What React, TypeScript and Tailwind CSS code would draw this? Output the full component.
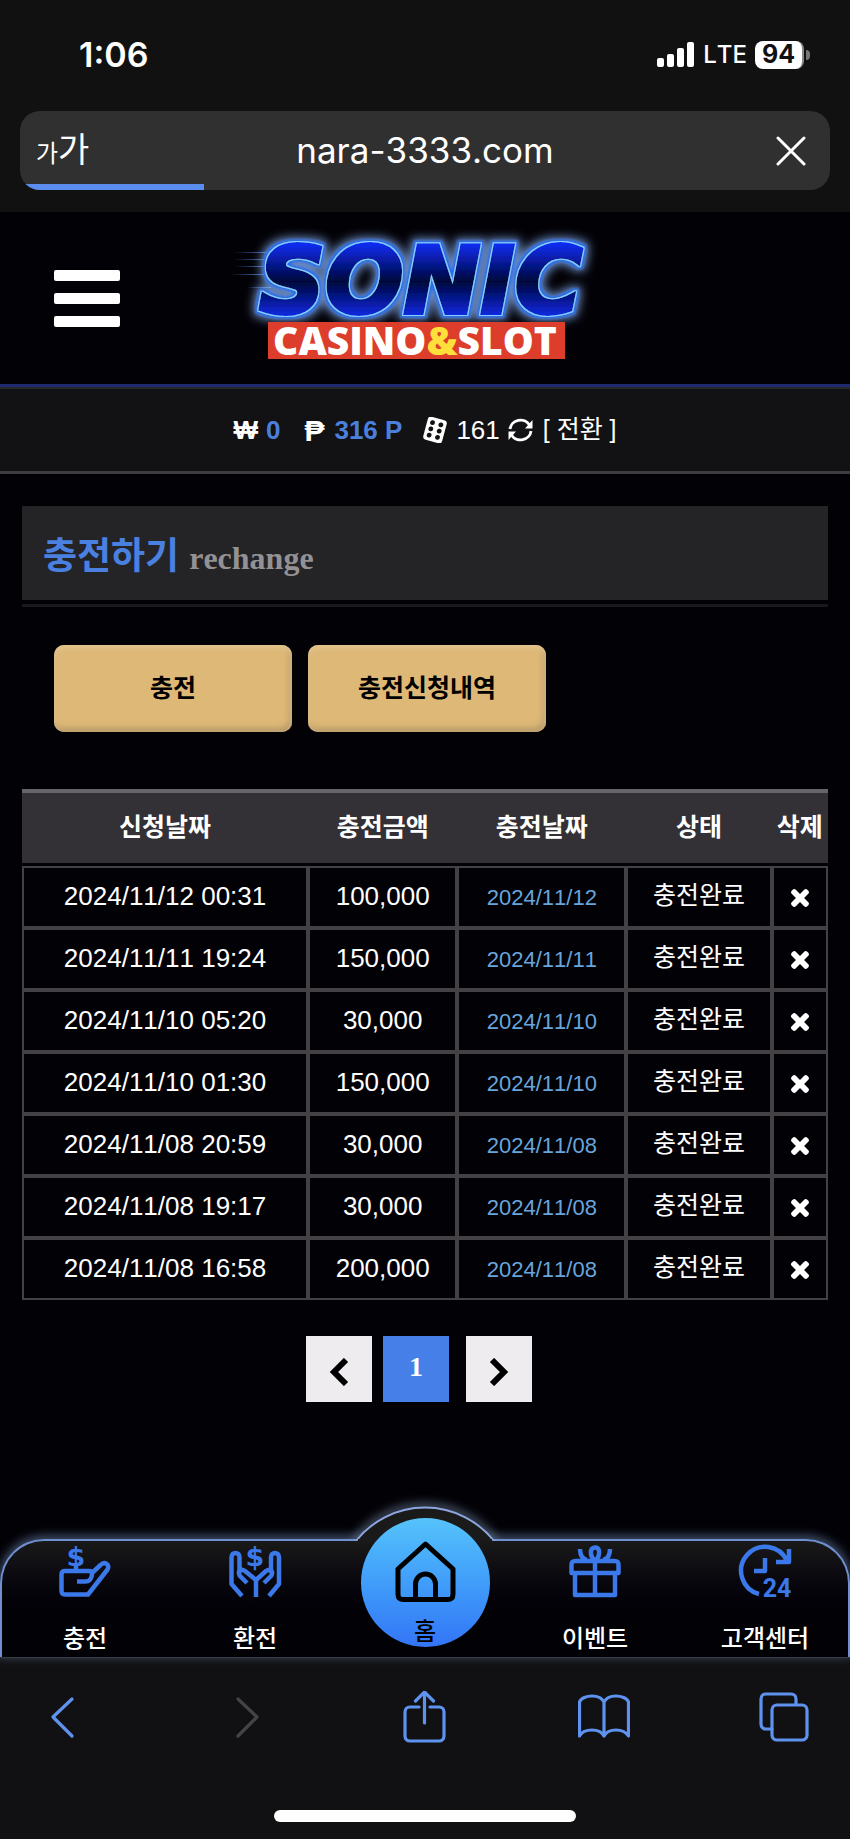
import { FaTimes } from "react-icons/fa";
import type { ReactNode } from "react";

const kr = "font-['Liberation_Sans','Noto_Sans_CJK_KR',sans-serif]";

const columns = ["신청날짜", "충전금액", "충전날짜", "상태", "삭제"];

const rows = [
  { requested: "2024/11/12 00:31", amount: "100,000", date: "2024/11/12" },
  { requested: "2024/11/11 19:24", amount: "150,000", date: "2024/11/11" },
  { requested: "2024/11/10 05:20", amount: "30,000", date: "2024/11/10" },
  { requested: "2024/11/10 01:30", amount: "150,000", date: "2024/11/10" },
  { requested: "2024/11/08 20:59", amount: "30,000", date: "2024/11/08" },
  { requested: "2024/11/08 19:17", amount: "30,000", date: "2024/11/08" },
  { requested: "2024/11/08 16:58", amount: "200,000", date: "2024/11/08" },
];

function StatusBar() {
  return (
    <div className="flex h-[109px] items-center justify-between pr-10 pl-[79px] font-['Inter',sans-serif] text-white">
      <span className="text-[34px] font-semibold">1:06</span>
      <div className="flex items-center gap-2">
        <svg width="38" height="26" viewBox="0 0 38 26" fill="currentColor">
          <rect x="0" y="16" width="7" height="9" rx="2" />
          <rect x="10" y="12" width="7" height="13" rx="2" />
          <rect x="20" y="6" width="7" height="19" rx="2" />
          <rect x="30" y="0" width="7" height="25" rx="2" />
        </svg>
        <span className="text-[24px] font-medium">LTE</span>
        <div className="flex items-center gap-0.5">
          <span className="flex h-7 w-[49px] items-center justify-center rounded-lg border-r-2 border-[#8a8a8a] bg-white text-[25px] font-bold text-[#111]">
            94
          </span>
          <span className="h-2.5 w-1 rounded-r-full bg-[#777]" />
        </div>
      </div>
    </div>
  );
}

function AddressBar() {
  return (
    <div className="mx-5 mt-0.5 mb-[22px] grid h-[79px] grid-cols-[1fr_auto_1fr] grid-rows-[1fr_6px] items-center overflow-hidden rounded-[20px] bg-[#303030] text-white">
      <button
        type="button"
        className="flex items-baseline justify-self-start pl-4 font-['Noto_Sans_CJK_KR',sans-serif] leading-none"
      >
        <span className="text-[24px]">가</span>
        <span className="text-[34px]">가</span>
      </button>
      <span className="pt-1.5 font-['Inter',sans-serif] text-[35px] leading-none">
        nara-3333.com
      </span>
      <button type="button" aria-label="Stop" className="justify-self-end pt-1.5 pr-6">
        <svg width="30" height="30" viewBox="0 0 30 30" fill="none" stroke="currentColor" strokeWidth="3" strokeLinecap="round">
          <path d="M2 2l26 26M28 2L2 28" />
        </svg>
      </button>
      <div className="col-span-3 h-full">
        <div className="h-full w-[184px] bg-[#5b8def]" />
      </div>
    </div>
  );
}

function Logo() {
  return (
    <svg width="400" height="145" viewBox="0 0 400 145" role="img" aria-label="SONIC CASINO&SLOT">
      <defs>
        <linearGradient id="sonicFill" x1="0" y1="0" x2="0" y2="1">
          <stop offset="0.15" stopColor="#0a2cf0" />
          <stop offset="0.5" stopColor="#03063c" />
          <stop offset="0.85" stopColor="#0a2cf0" />
        </linearGradient>
        <linearGradient id="speed" x1="0" y1="0" x2="1" y2="0">
          <stop offset="0" stopColor="#5b8def" stopOpacity="0" />
          <stop offset="1" stopColor="#5b8def" />
        </linearGradient>
        {/* thin light rim, blue band round it, then the outer haze */}
        <filter id="neon" x="-10%" y="-40%" width="120%" height="180%">
          <feMorphology in="SourceAlpha" operator="dilate" radius="1" result="rimShape" />
          <feFlood floodColor="#86d0ff" />
          <feComposite in2="rimShape" operator="in" result="rim" />
          <feMorphology in="SourceAlpha" operator="dilate" radius="3" result="bandShape" />
          <feGaussianBlur in="bandShape" stdDeviation="1" result="bandSoft" />
          <feFlood floodColor="#2a6fe6" />
          <feComposite in2="bandSoft" operator="in" result="band" />
          <feMorphology in="SourceAlpha" operator="dilate" radius="5" result="hazeShape" />
          <feGaussianBlur in="hazeShape" stdDeviation="5" result="hazeSoft" />
          <feFlood floodColor="#7fa8e8" floodOpacity="0.8" />
          <feComposite in2="hazeSoft" operator="in" result="haze" />
          <feMerge>
            <feMergeNode in="haze" />
            <feMergeNode in="band" />
            <feMergeNode in="rim" />
            <feMergeNode in="SourceGraphic" />
          </feMerge>
        </filter>
      </defs>
      <g fill="url(#speed)">
        <rect x="8" y="26" width="44" height="1" />
        <rect x="8" y="33" width="42" height="1" />
        <rect x="10" y="40" width="38" height="1" />
        <rect x="5" y="48" width="42" height="1" />
        <rect x="22" y="61" width="24" height="1" />
        <rect x="28" y="76" width="12" height="1" />
      </g>
      <text
        x="34"
        y="87"
        fontFamily="'DejaVu Sans', sans-serif"
        fontWeight="700"
        fontStyle="italic"
        fontSize="92"
        fill="url(#sonicFill)"
        stroke="url(#sonicFill)"
        strokeWidth="4"
        filter="url(#neon)"
      >
        SONIC
      </text>
      <rect x="43" y="96" width="297" height="37" fill="#dd3d2b" />
      <text x="190" y="129" textAnchor="middle" fontFamily="'Open Sans', sans-serif" fontWeight="800" fontSize="39" fill="#fff">
        CASINO<tspan fill="#ffe03a">&amp;</tspan>SLOT
      </text>
    </svg>
  );
}

function Balance() {
  return (
    <div className="flex h-[87px] items-center justify-center border-t-2 border-b-3 border-t-[#27262b] border-b-[#3d3c3f] bg-[#121114] text-[26px] text-white">
      <b>₩</b>
      <b className="ml-2 text-[#4a80dc]">0</b>
      <b className="ml-6 text-[30px]">₱</b>
      <b className="ml-2.5 text-[#4a80dc]">316 P</b>
      <svg width="26" height="26" viewBox="0 0 24 24" className="ml-5">
        <g transform="rotate(15 12 12)">
          <rect x="3" y="1" width="18" height="22" rx="3" fill="#fff" />
          <g fill="#121114">
            <circle cx="8" cy="6" r="2.2" />
            <circle cx="8" cy="12" r="2.2" />
            <circle cx="8" cy="18" r="2.2" />
            <circle cx="16" cy="6" r="2.2" />
            <circle cx="16" cy="12" r="2.2" />
            <circle cx="16" cy="18" r="2.2" />
          </g>
        </g>
      </svg>
      <span className="ml-2">161</span>
      <button type="button" className="ml-2 flex items-center">
        <svg width="25" height="24" viewBox="0 0 25 24" fill="none" stroke="#fff" strokeWidth="2.8">
          <path d="M2 11A10.500 10 0 0 1 21.500 7M23 13A10.500 10 0 0 1 3.500 17" />
          <path d="M24.500 2v8.500H17zM.5 22v-8.500H8z" fill="#fff" stroke="none" />
        </svg>
        <span className="ml-2.5 text-[25px]">[ 전환 ]</span>
      </button>
    </div>
  );
}

function HistoryTable() {
  return (
    <table className="mt-[57px] w-full table-fixed border-separate border-spacing-0 text-center text-white">
      <colgroup>
        <col className="w-[35.5%]" />
        <col className="w-[18.5%]" />
        <col className="w-[21%]" />
        <col className="w-[18%]" />
        <col className="w-[7%]" />
      </colgroup>
      <thead>
        <tr>
          {columns.map((column) => (
            <th
              key={column}
              className="h-[77px] border-t-4 border-b-3 border-t-[#666567] border-b-[#020106] bg-[#333135] text-[25px] font-bold whitespace-nowrap"
            >
              {column}
            </th>
          ))}
        </tr>
      </thead>
      <tbody>
        {rows.map((row) => (
          <tr key={row.requested} className="h-[62px] text-[26px] leading-8 *:border-2 *:border-[#434144]">
            <td className="pb-0.5">{row.requested}</td>
            <td className="pb-0.5">{row.amount}</td>
            <td className="pt-0.5 text-[22px] text-[#68a5dc]">{row.date}</td>
            <td className="pb-1 text-[25px]">충전완료</td>
            <td>
              <button type="button" aria-label="삭제" className="block w-full pt-0.5">
                <FaTimes className="mx-auto size-6 stroke-white stroke-[30]" />
              </button>
            </td>
          </tr>
        ))}
      </tbody>
    </table>
  );
}

function Pagination() {
  return (
    <nav className="mt-9 flex pl-[284px] font-['Liberation_Serif',serif]">
      <button type="button" aria-label="이전" className="flex size-[66px] items-center justify-center bg-[#eeecef] pt-1.5">
        <svg width="20" height="28" viewBox="0 0 20 28" fill="none" stroke="#000" strokeWidth="6">
          <path d="M17 2L5 14l12 12" />
        </svg>
      </button>
      <button type="button" className="ml-[11px] size-[66px] bg-[#477fe9] pb-1 text-[28px] font-bold text-white">
        1
      </button>
      <button type="button" aria-label="다음" className="ml-[17px] flex size-[66px] items-center justify-center bg-[#eeecef] pt-1.5">
        <svg width="20" height="28" viewBox="0 0 20 28" fill="none" stroke="#000" strokeWidth="6">
          <path d="M3 2l12 12L3 26" />
        </svg>
      </button>
    </nav>
  );
}

function MenuItem({ label, children }: { label: string; children: ReactNode }) {
  return (
    <a href="#" className="flex flex-col items-center gap-7 pt-1 text-white">
      <svg width="52" height="52" viewBox="0 0 52 52" fill="none" stroke="#3b78ea" strokeWidth="4.500" strokeLinejoin="round" className="overflow-visible">
        {children}
      </svg>
      <span className="text-[24px] leading-7 font-medium">{label}</span>
    </a>
  );
}

const glyph = {
  fill: "#3b78ea",
  stroke: "none",
  fontFamily: "'DejaVu Sans', sans-serif",
  fontWeight: 700,
};

function BottomMenu() {
  return (
    <nav className="relative mt-[137px] h-[118px] rounded-t-[44px] border-2 border-b-0 border-[#6f8fd0] bg-linear-to-b from-[#1a1919] to-[#020106] to-60% shadow-[0_-2px_10px_2px_rgba(130,165,210,0.45)]">
      <svg width="158" height="46" viewBox="0 0 158 46" className="absolute -top-[46px] left-1/2 -translate-x-1/2">
        <defs>
          <filter id="domeGlow" x="-20%" y="-40%" width="140%" height="180%">
            <feGaussianBlur stdDeviation="5" />
          </filter>
        </defs>
        <path d="M10 45a88 88 0 0 1 138 0" fill="none" stroke="#9cb8dc" strokeWidth="7" opacity="0.5" filter="url(#domeGlow)" />
        <path d="M10 46a88 88 0 0 1 138 0" fill="#1b1a1a" stroke="#8ea6e0" strokeWidth="2" />
        <rect x="12" y="44" width="134" height="2" fill="#1b1a1a" />
      </svg>
      <div className="-mx-0.5 grid grid-cols-5">
        <MenuItem label="충전">
          <text x="17" y="21" textAnchor="middle" fontSize="27" {...glyph}>$</text>
          <path d="M17 20v6M18 36.500h8c5 0 7-4 7-7.500 0-2-1-3-3-3H6c-2.500 0-3.500 1-3.500 3.500v16c0 3 1 4 3.500 4h23l19.500-25c3-5-3-8.500-7-4.500L33 28" />
        </MenuItem>
        <MenuItem label="환전">
          <text x="26" y="21" textAnchor="middle" fontSize="27" {...glyph}>$</text>
          <path d="M13 51L2.500 39V12c0-5.500 8-5.500 8 0v16M18 38l-7-7c-3-5 1-8 5-5l11 9v17" />
          <path d="M40 51l10-12V12c0-5.500-8-5.500-8 0v16M35 38l7-7c3-5-1-8-5-5l-10 9" />
        </MenuItem>
        <a href="#" className="flex flex-col items-center font-medium text-black">
          <div className="relative -mt-[23px] flex size-[129px] shrink-0 flex-col items-center rounded-full bg-linear-to-b from-[#55c3fb] to-[#3474f6] pt-[23px]">
            <svg width="61" height="61" viewBox="0 0 61 61" fill="none" stroke="#000" strokeWidth="5" strokeLinejoin="round">
              <path d="M30.500 3L58 28v25c0 4-1.500 5.500-5.500 5.500h-44C4.500 58.500 3 57 3 53V28z" />
              <path d="M20.500 58V43a10 10 0 0 1 20 0v15" />
            </svg>
            <span className="mt-4 text-[24px] leading-7">홈</span>
          </div>
        </a>
        <MenuItem label="이벤트">
          <path d="M2.500 28V20c0-3 1-4 4-4h39c3 0 4 1 4 4v8zM6 28v22h40V28M26 16v34" />
          <path d="M26 16c-5-4-6-13 0-13.500s5 9.500 0 13.500zM11 4c0 6 2 10 7 11M41 4c0 6-2 10-7 11" />
        </MenuItem>
        <MenuItem label="고객센터">
          <path d="M20 49A24 24 0 1 1 48 16M50 4v13H37M26 13v13H15" />
          <text x="38" y="52" textAnchor="middle" fontSize="25" {...glyph} fontFamily="Roboto, sans-serif">24</text>
        </MenuItem>
      </div>
    </nav>
  );
}

function ToolbarButton({ label, children }: { label: string; children: ReactNode }) {
  return (
    <button type="button" aria-label={label}>
      <svg width="52" height="52" viewBox="0 0 52 52" fill="none" stroke="#5f92ee" strokeWidth="3.200" strokeLinecap="round" strokeLinejoin="round">
        {children}
      </svg>
    </button>
  );
}

function BrowserToolbar() {
  return (
    <div className="border-t border-[#232325] bg-[#111113] pt-[33px] pb-[18px]">
      <div className="flex justify-between pr-10 pl-[37px]">
        <ToolbarButton label="Back">
          <path d="M35 8L16 26l19 19" />
        </ToolbarButton>
        <ToolbarButton label="Forward">
          <path d="M21 8l19 18-19 19" stroke="#444446" />
        </ToolbarButton>
        <ToolbarButton label="Share">
          <path d="M21 16h-9c-3 0-5 2-5 5v24c0 3 2 5 5 5h29c3 0 5-2 5-5V21c0-3-2-5-5-5h-9M26.500 32V2M17.500 10l9-9 9 9" />
        </ToolbarButton>
        <ToolbarButton label="Bookmarks">
          <path d="M26 11c-2-4-7-6-12-6S3 7 1.500 11v34c2-4 7-6 12.500-6s10 2 12 6c2-4 7-6 12-6s10 2 12.500 6V11C49 7 43 5 38 5s-10 2-12 6v34" />
        </ToolbarButton>
        <ToolbarButton label="Tabs">
          <rect x="14" y="14" width="35" height="35" rx="5" />
          <path d="M14 38H8c-3 0-5-2-5-5V8c0-3 2-5 5-5h25c3 0 5 2 5 5v5" />
        </ToolbarButton>
      </div>
      <div className="mx-auto mt-[67px] h-3 w-[302px] rounded-full bg-white" />
    </div>
  );
}

export default function App() {
  return (
    <div className={`overflow-hidden bg-[#020106] [font-kerning:none] ${kr}`}>
      <div className="flow-root bg-[#111112]">
        <StatusBar />
        <AddressBar />
      </div>
      <header className="grid h-[175px] grid-cols-[1fr_auto_1fr] items-center border-b-3 border-[#1d2a70]">
        <button type="button" aria-label="메뉴" className="ml-[54px] flex w-[66px] flex-col gap-3">
          <span className="h-[11px] rounded-xs bg-white" />
          <span className="h-[11px] rounded-xs bg-white" />
          <span className="h-[11px] rounded-xs bg-white" />
        </button>
        <Logo />
      </header>
      <Balance />
      <main className="px-[22px] pt-8">
        <div className="border-b-3 border-[#19181b] pb-1">
          <h1 className="flex h-[94px] items-center gap-2.5 bg-[#242326] pl-[21px] text-[37px] font-bold text-[#4a80e0]">
            <span className="pt-2">충전하기</span>
            <small className="pt-2.5 font-['Liberation_Serif',serif] text-[32px] text-[#939194]">
              rechange
            </small>
          </h1>
        </div>
        <div className="mt-[38px] flex gap-4 pl-8">
          {["충전", "충전신청내역"].map((label) => (
            <button
              key={label}
              type="button"
              className="h-[87px] w-[238px] rounded-[10px] bg-[#ddb877] text-[25px] font-bold text-black shadow-[inset_0_2px_6px_#e8cb96,inset_-2px_-3px_6px_#a98d62]"
            >
              {label}
            </button>
          ))}
        </div>
        <HistoryTable />
        <Pagination />
      </main>
      <BottomMenu />
      <BrowserToolbar />
    </div>
  );
}
